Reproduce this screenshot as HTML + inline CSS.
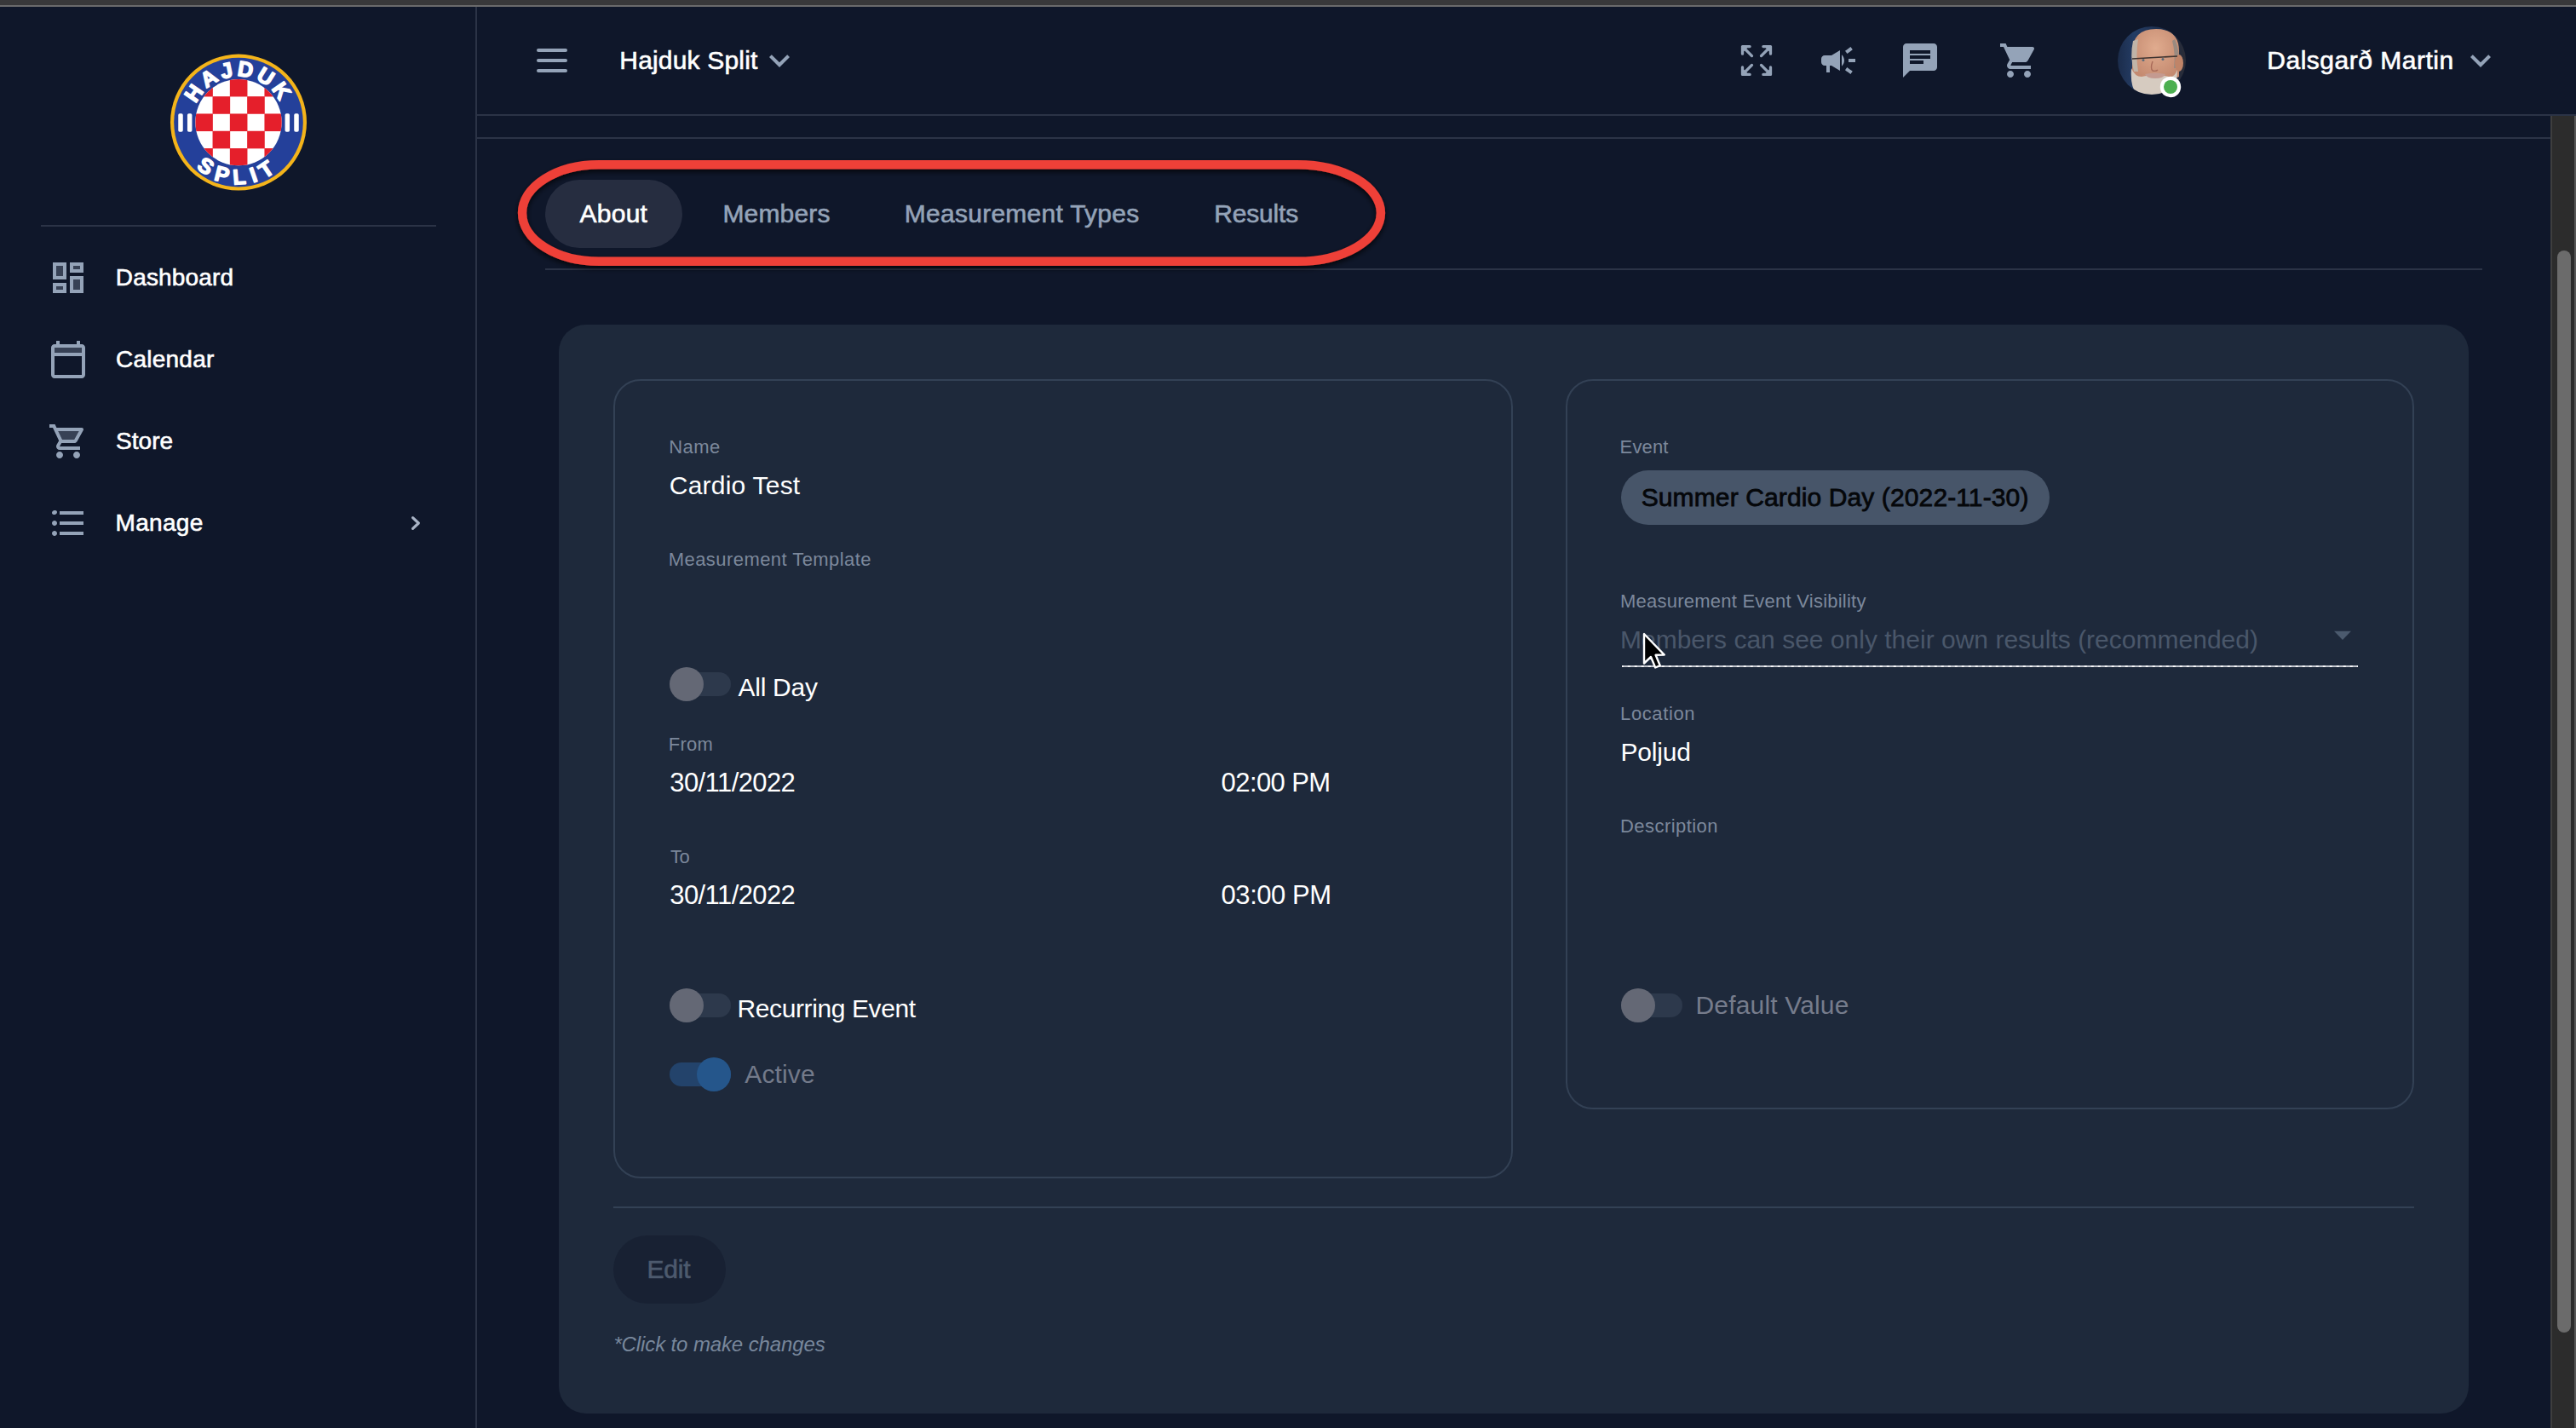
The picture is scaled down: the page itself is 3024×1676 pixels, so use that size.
<!DOCTYPE html>
<html><head><meta charset="utf-8"><style>
html,body{margin:0;padding:0;width:3024px;height:1676px;overflow:hidden;background:#0f172a}
body{position:relative;font-family:"Liberation Sans", sans-serif}
.t{position:absolute;white-space:nowrap;line-height:1}
.bx{position:absolute;box-sizing:border-box}
.ic{position:absolute;overflow:visible}
</style></head><body>
<div class="bx" style="left:0;top:0;width:3024px;height:6px;background:#38383a"></div>
<div class="bx" style="left:0;top:6px;width:3024px;height:2px;background:#6a6a6b"></div>
<div class="bx" style="left:558px;top:8px;width:2px;height:1668px;background:#2b3346"></div>
<svg class="ic" style="left:0;top:0;width:560px;height:270px" viewBox="0 0 560 270">
<defs><clipPath id="ck"><circle cx="280" cy="143.6" r="50.7"/></clipPath>
<path id="arcT" d="M 226 143.6 A 54 54 0 0 1 334 143.6"/>
<path id="arcB" d="M 207.5 143.6 A 72.5 72.5 0 0 0 352.5 143.6"/></defs>
<circle cx="280" cy="143.6" r="80" fill="#f4b41a"/>
<circle cx="280" cy="143.6" r="75.8" fill="#24409a"/>
<circle cx="280" cy="143.6" r="50.7" fill="#ffffff"/>
<g clip-path="url(#ck)" fill="#e51f2b"><rect x="229.25" y="92.85" width="20.60" height="20.60"/><rect x="269.85" y="92.85" width="20.60" height="20.60"/><rect x="310.45" y="92.85" width="20.60" height="20.60"/><rect x="249.55" y="113.15" width="20.60" height="20.60"/><rect x="290.15" y="113.15" width="20.60" height="20.60"/><rect x="229.25" y="133.45" width="20.60" height="20.60"/><rect x="269.85" y="133.45" width="20.60" height="20.60"/><rect x="310.45" y="133.45" width="20.60" height="20.60"/><rect x="249.55" y="153.75" width="20.60" height="20.60"/><rect x="290.15" y="153.75" width="20.60" height="20.60"/><rect x="229.25" y="174.05" width="20.60" height="20.60"/><rect x="269.85" y="174.05" width="20.60" height="20.60"/><rect x="310.45" y="174.05" width="20.60" height="20.60"/></g>
<g fill="#fff" stroke="#fff" stroke-width="1.5" stroke-linejoin="round" font-family="Liberation Sans" font-weight="700" font-size="25">
<text><textPath href="#arcT" startOffset="50%" text-anchor="middle" letter-spacing="3.6">HAJDUK</textPath></text>
<text><textPath href="#arcB" startOffset="50%" text-anchor="middle" letter-spacing="7.5">SPLIT</textPath></text>
<rect x="210" y="134" width="4" height="20" rx="1"/><rect x="220.7" y="134" width="4" height="20" rx="1"/>
<rect x="335.3" y="134" width="4" height="20" rx="1"/><rect x="346" y="134" width="4" height="20" rx="1"/>
</g></svg>
<div class="bx" style="left:48px;top:264px;width:464px;height:2px;background:#2b3346"></div>
<svg class="ic" style="left:56px;top:302px;width:48px;height:48px" viewBox="0 0 24 24" fill="#94a3b8"><path d="M5 5h4v6H5zm10 8h4v6h-4zM5 17h4v2H5zM15 5h4v2h-4z" opacity=".3"/><path d="M3 13h8V3H3v10zm2-8h4v6H5V5zm8 16h8V11h-8v10zm2-8h4v6h-4v-6zM13 3v6h8V3h-8zm6 4h-4V5h4v2zM3 21h8v-6H3v6zm2-4h4v2H5v-2z"/></svg>
<svg class="ic" style="left:56px;top:398px;width:48px;height:48px" viewBox="0 0 24 24" fill="#94a3b8"><path d="M4 5.01h16V8H4z" opacity=".3"/><path d="M20 3h-1V1h-2v2H7V1H5v2H4c-1.1 0-2 .9-2 2v16c0 1.1.9 2 2 2h16c1.1 0 2-.9 2-2V5c0-1.1-.9-2-2-2zm0 18H4V10h16v11zm0-13H4V5h16v3z"/></svg>
<svg class="ic" style="left:56px;top:494px;width:48px;height:48px" viewBox="0 0 24 24" fill="#94a3b8"><path d="M15.55 11l2.76-5H6.16l2.37 5z" opacity=".3"/><path d="M15.55 13c.75 0 1.41-.41 1.75-1.03l3.58-6.49c.37-.66-.11-1.48-.87-1.48H5.21l-.94-2H1v2h2l3.6 7.59-1.35 2.44C4.520 15.37 5.48 17 7 17h12v-2H7l1.1-2h7.45zM6.16 6h12.15l-2.76 5H8.53L6.16 6zM7 18c-1.1 0-1.99.9-1.99 2S5.9 22 7 22s2-.9 2-2-.9-2-2-2zm10 0c-1.1 0-1.99.9-1.99 2s.89 2 1.99 2 2-.9 2-2-.9-2-2-2z"/></svg>
<svg class="ic" style="left:56px;top:590px;width:48px;height:48px" viewBox="0 0 24 24" fill="#94a3b8"><path d="M4 10.5c-.83 0-1.5.67-1.5 1.5s.67 1.5 1.5 1.5 1.5-.67 1.5-1.5-.67-1.5-1.5-1.5zm0-6c-.83 0-1.5.67-1.5 1.5S3.17 7 4 7s1.5-.67 1.5-1.5S4.830 4.5 4 4.5zm0 12c-.83 0-1.5.68-1.5 1.5s.68 1.5 1.5 1.5 1.5-.68 1.5-1.5-.67-1.5-1.5-1.5zM7 19h14v-2H7v2zm0-6h14v-2H7v2zm0-8v2h14V5H7z"/></svg>
<svg class="ic" style="left:470px;top:595px;width:40px;height:40px" viewBox="470 595 40 40"><polyline points="484.6,607.6 491.4,614 484.6,620.4" fill="none" stroke="#a9b4c6" stroke-width="3.2" stroke-linecap="round" stroke-linejoin="round"/></svg>
<div class="bx" style="left:560px;top:134px;width:2464px;height:2px;background:#2b3346"></div>
<div class="bx" style="left:560px;top:161px;width:2434px;height:2px;background:#2b3346"></div>
<div class="bx" style="left:630px;top:57px;width:36px;height:4px;border-radius:2px;background:#94a3b8"></div>
<div class="bx" style="left:630px;top:69px;width:36px;height:4px;border-radius:2px;background:#94a3b8"></div>
<div class="bx" style="left:630px;top:81px;width:36px;height:4px;border-radius:2px;background:#94a3b8"></div>
<svg class="ic" style="left:891px;top:47px;width:48px;height:48px" viewBox="0 0 24 24" fill="#94a3b8"><path d="M16.59 8.59L12 13.17 7.41 8.59 6 10l6 6 6-6z"/></svg>
<svg class="ic" style="left:2030px;top:40px;width:64px;height:64px" viewBox="2030 40 64 64"><g transform="translate(2062 71) scale(1 1) translate(-16.5 -16.4)"><g><path d="M8.6 0 H0 V8.6" fill="none" stroke="#94a3b8" stroke-width="3.3" stroke-linecap="round" stroke-linejoin="round"/><path d="M0 0 H7.4 L0 7.4Z" fill="#94a3b8"/><path d="M1 1 L11 11" stroke="#94a3b8" stroke-width="3.3" stroke-linecap="round"/></g></g><g transform="translate(2062 71) scale(-1 1) translate(-16.5 -16.4)"><g><path d="M8.6 0 H0 V8.6" fill="none" stroke="#94a3b8" stroke-width="3.3" stroke-linecap="round" stroke-linejoin="round"/><path d="M0 0 H7.4 L0 7.4Z" fill="#94a3b8"/><path d="M1 1 L11 11" stroke="#94a3b8" stroke-width="3.3" stroke-linecap="round"/></g></g><g transform="translate(2062 71) scale(1 -1) translate(-16.5 -16.4)"><g><path d="M8.6 0 H0 V8.6" fill="none" stroke="#94a3b8" stroke-width="3.3" stroke-linecap="round" stroke-linejoin="round"/><path d="M0 0 H7.4 L0 7.4Z" fill="#94a3b8"/><path d="M1 1 L11 11" stroke="#94a3b8" stroke-width="3.3" stroke-linecap="round"/></g></g><g transform="translate(2062 71) scale(-1 -1) translate(-16.5 -16.4)"><g><path d="M8.6 0 H0 V8.6" fill="none" stroke="#94a3b8" stroke-width="3.3" stroke-linecap="round" stroke-linejoin="round"/><path d="M0 0 H7.4 L0 7.4Z" fill="#94a3b8"/><path d="M1 1 L11 11" stroke="#94a3b8" stroke-width="3.3" stroke-linecap="round"/></g></g></svg>
<svg class="ic" style="left:2134px;top:47px;width:48px;height:48px" viewBox="0 0 24 24" fill="#94a3b8"><path d="M18 11v2h4v-2h-4zm-2 6.61c.96.71 2.21 1.65 3.2 2.39.4-.53.8-1.07 1.2-1.6-.99-.74-2.24-1.68-3.2-2.4-.4.54-.8 1.08-1.2 1.61zM20.4 5.6c-.4-.53-.8-1.07-1.2-1.6-.99.74-2.24 1.68-3.2 2.4.4.53.8 1.07 1.2 1.6.96-.72 2.21-1.65 3.2-2.4zM4 9c-1.1 0-2 .9-2 2v2c0 1.1.9 2 2 2h1v4h2v-4h1l5 3V6L8 9H4zm11.5 3c0-1.33-.58-2.53-1.5-3.35v6.69c.92-.81 1.5-2.01 1.5-3.34z"/></svg>
<svg class="ic" style="left:2230px;top:47px;width:48px;height:48px" viewBox="0 0 24 24" fill="#94a3b8"><path d="M20 2H4c-1.1 0-1.99.9-1.99 2L2 22l4-4h14c1.1 0 2-.9 2-2V4c0-1.1-.9-2-2-2zM6 9h12v2H6V9zm8 5H6v-2h8v2zm4-6H6V6h12v2z"/></svg>
<svg class="ic" style="left:2346px;top:47px;width:48px;height:48px" viewBox="0 0 24 24" fill="#94a3b8"><path d="M7 18c-1.1 0-1.99.9-1.99 2S5.9 22 7 22s2-.9 2-2-.9-2-2-2zM1 2v2h2l3.6 7.59-1.35 2.45c-.16.28-.25.61-.25.96 0 1.1.9 2 2 2h12v-2H7.42c-.14 0-.25-.11-.25-.25l.03-.12.9-1.63h7.45c.75 0 1.41-.41 1.75-1.03l3.58-6.49c.08-.14.12-.31.12-.48 0-.55-.45-1-1-1H5.21l-.94-2H1zm16 16c-1.1 0-1.99.9-1.99 2s.89 2 1.990 2 2-.9 2-2-.9-2-2-2z"/></svg>
<svg class="ic" style="left:2480px;top:25px;width:90px;height:95px" viewBox="2480 25 90 95">
<defs><clipPath id="av"><circle cx="2526" cy="71" r="40"/></clipPath>
<linearGradient id="avbg" x1="0" x2="1"><stop offset="0" stop-color="#1a2a48"/><stop offset="0.25" stop-color="#243c64"/><stop offset="0.7" stop-color="#1c2c48"/><stop offset="1" stop-color="#2c2c34"/></linearGradient>
<radialGradient id="skin" cx="0.5" cy="0.35" r="0.6"><stop offset="0" stop-color="#e0ab8e"/><stop offset="1" stop-color="#c48a70"/></radialGradient></defs>
<g clip-path="url(#av)">
<rect x="2484" y="29" width="84" height="84" fill="url(#avbg)"/>
<path d="M2503 62 Q2503 34 2531 34 Q2559 34 2558 62 L2558 90 Q2540 100 2520 98 L2503 88Z" fill="url(#skin)"/>
<path d="M2504 48 Q2500 66 2505 84 L2510 84 Q2507 64 2510 46Z" fill="#c0b4a8"/>
<path d="M2553 46 Q2560 60 2557 80 L2552 80 Q2554 62 2550 48Z" fill="#9a8a80"/>
<ellipse cx="2558" cy="74" rx="5" ry="10" fill="#c08468"/>
<path d="M2502 80 Q2500 106 2512 114 L2548 114 Q2556 100 2556 82 Q2552 92 2546 90 Q2530 86 2514 90 Q2506 90 2502 80Z" fill="#d6cbc0"/>
<path d="M2518 87 Q2530 84 2542 87 Q2540 92 2530 92 Q2520 92 2518 87Z" fill="#c49a90"/>
<path d="M2503 69 L2556 66" stroke="#3f3430" stroke-width="1.6" fill="none"/>
<circle cx="2516" cy="70.5" r="1.5" fill="#5a6a78"/><circle cx="2539" cy="69.5" r="1.5" fill="#5a6a78"/>
<path d="M2527 72 Q2524 80 2527 83 Q2531 84 2533 82" stroke="#a86a58" stroke-width="1.4" fill="none"/>
</g>
<circle cx="2548" cy="102" r="12.2" fill="#ffffff"/>
<circle cx="2548" cy="102" r="8" fill="#4caf50"/>
</svg>
<svg class="ic" style="left:2888px;top:47px;width:48px;height:48px" viewBox="0 0 24 24" fill="#94a3b8"><path d="M16.59 8.59L12 13.17 7.41 8.59 6 10l6 6 6-6z"/></svg>
<div class="bx" style="left:640px;top:211px;width:161px;height:80px;border-radius:40px;background:#262d40"></div>
<div class="bx" style="left:640px;top:315px;width:2274px;height:2px;background:#2b3346"></div>
<svg class="ic" style="left:580px;top:170px;width:1080px;height:170px" viewBox="580 170 1080 170">
<defs><filter id="sh" x="-5%" y="-30%" width="110%" height="160%"><feDropShadow dx="0" dy="3" stdDeviation="3" flood-color="#000" flood-opacity="0.75"/></filter></defs>
<path d="M703 193.2 L1523 193.2 A98 56.8 0 0 1 1523 306.8 L703 306.8 A90 56.8 0 0 1 703 193.2 Z" fill="none" stroke="#ee4037" stroke-width="10.4" filter="url(#sh)"/>
</svg>
<div class="bx" style="left:656px;top:381px;width:2242px;height:1278px;border-radius:32px;background:#1e293b"></div>
<div class="bx" style="left:720px;top:445px;width:1056px;height:938px;border-radius:32px;border:2px solid #334155"></div>
<div class="bx" style="left:1838px;top:445px;width:996px;height:857px;border-radius:32px;border:2px solid #334155"></div>
<div class="bx" style="left:786px;top:789px;width:72px;height:28px;border-radius:14px;background:#2d394c"></div><div class="bx" style="left:786px;top:783px;width:40px;height:40px;border-radius:20px;background:#646875"></div>
<div class="bx" style="left:786px;top:1166px;width:72px;height:28px;border-radius:14px;background:#2d394c"></div><div class="bx" style="left:786px;top:1160px;width:40px;height:40px;border-radius:20px;background:#646875"></div>
<div class="bx" style="left:786px;top:1247px;width:72px;height:28px;border-radius:14px;background:#23436b"></div><div class="bx" style="left:818px;top:1241px;width:40px;height:40px;border-radius:20px;background:#25568b"></div>
<div class="bx" style="left:1903px;top:1166px;width:72px;height:28px;border-radius:14px;background:#2d394c"></div><div class="bx" style="left:1903px;top:1160px;width:40px;height:40px;border-radius:20px;background:#646875"></div>
<div class="bx" style="left:1903px;top:552px;width:503px;height:64px;border-radius:32px;background:#475569"></div>
<svg class="ic" style="left:2740px;top:740px;width:20px;height:11px" viewBox="0 0 20 11"><path d="M0 0.8H20L10 10.9Z" fill="#4b5a6e"/></svg>
<div class="bx" style="left:1904px;top:781px;width:864px;height:2px;background:repeating-linear-gradient(90deg,#c0c4cc 0 5.3px,#f4f4f6 5.3px 8px);background-position:1.8px 0"></div>
<div class="bx" style="left:720px;top:1416px;width:2114px;height:2px;background:#334155"></div>
<div class="bx" style="left:720px;top:1450px;width:132px;height:80px;border-radius:40px;background:#182133"></div>
<div class="bx" style="left:2994px;top:136px;width:30px;height:1540px;background:#2c2c2c;border-left:2px solid #3e3e3e;border-right:2px solid #575757"></div>
<div class="bx" style="left:3002px;top:294px;width:16px;height:1270px;border-radius:8px;background:#6b6b6b"></div>
<div class="t" style="left:135.8px;top:312.0px;font-size:28px;letter-spacing:0.15px;color:#ffffff;-webkit-text-stroke:0.6px #ffffff;">Dashboard</div>
<div class="t" style="left:136.0px;top:408.0px;font-size:28px;letter-spacing:0.243px;color:#ffffff;-webkit-text-stroke:0.6px #ffffff;">Calendar</div>
<div class="t" style="left:136.0px;top:504.0px;font-size:28px;letter-spacing:0.05px;color:#ffffff;-webkit-text-stroke:0.6px #ffffff;">Store</div>
<div class="t" style="left:135.5px;top:600.0px;font-size:28px;letter-spacing:0.32px;color:#ffffff;-webkit-text-stroke:0.6px #ffffff;">Manage</div>
<div class="t" style="left:727.3px;top:56.0px;font-size:30px;letter-spacing:0.182px;color:#ffffff;-webkit-text-stroke:0.6px #ffffff;">Hajduk Split</div>
<div class="t" style="left:2661.3px;top:56.0px;font-size:30px;letter-spacing:0.514px;color:#ffffff;-webkit-text-stroke:0.6px #ffffff;">Dalsgarð Martin</div>
<div class="t" style="left:680.5px;top:236.0px;font-size:30px;letter-spacing:0.25px;color:#ffffff;-webkit-text-stroke:0.6px #ffffff;">About</div>
<div class="t" style="left:848.4px;top:236.0px;font-size:30px;letter-spacing:0.167px;color:#94a3b8;-webkit-text-stroke:0.6px #94a3b8;">Members</div>
<div class="t" style="left:1061.8px;top:236.0px;font-size:30px;letter-spacing:0.262px;color:#94a3b8;-webkit-text-stroke:0.6px #94a3b8;">Measurement Types</div>
<div class="t" style="left:1425.2px;top:236.0px;font-size:30px;letter-spacing:-0.167px;color:#94a3b8;-webkit-text-stroke:0.6px #94a3b8;">Results</div>
<div class="t" style="left:785.2px;top:514.0px;font-size:22px;letter-spacing:0.433px;color:#7c889b;">Name</div>
<div class="t" style="left:784.7px;top:646.0px;font-size:22px;letter-spacing:0.442px;color:#7c889b;">Measurement Template</div>
<div class="t" style="left:784.7px;top:863.0px;font-size:22px;letter-spacing:0.267px;color:#7c889b;">From</div>
<div class="t" style="left:787.0px;top:995.0px;font-size:22px;letter-spacing:-0.5px;color:#7c889b;">To</div>
<div class="t" style="left:785.8px;top:555.4px;font-size:30px;letter-spacing:0.22px;color:#ffffff;">Cardio Test</div>
<div class="t" style="left:786.3px;top:903.2px;font-size:31px;letter-spacing:-0.589px;color:#ffffff;">30/11/2022</div>
<div class="t" style="left:1433.6px;top:903.2px;font-size:31px;letter-spacing:-0.6px;color:#ffffff;">02:00 PM</div>
<div class="t" style="left:786.3px;top:1035.0px;font-size:31px;letter-spacing:-0.589px;color:#ffffff;">30/11/2022</div>
<div class="t" style="left:1433.6px;top:1035.0px;font-size:31px;letter-spacing:-0.471px;color:#ffffff;">03:00 PM</div>
<div class="t" style="left:866.5px;top:792.0px;font-size:30px;letter-spacing:-0.267px;color:#ffffff;">All Day</div>
<div class="t" style="left:865.5px;top:1169.0px;font-size:30px;letter-spacing:-0.393px;color:#ffffff;">Recurring Event</div>
<div class="t" style="left:874.3px;top:1246.0px;font-size:30px;letter-spacing:0.14px;color:#737a8a;">Active</div>
<div class="t" style="left:1901.6px;top:514.0px;font-size:22px;letter-spacing:0.125px;color:#7c889b;">Event</div>
<div class="t" style="left:1926.7px;top:569.0px;font-size:30px;letter-spacing:0.117px;color:#05070a;-webkit-text-stroke:0.8px #05070a;">Summer Cardio Day (2022-11-30)</div>
<div class="t" style="left:1902.0px;top:695.3px;font-size:22px;letter-spacing:0.237px;color:#7c889b;">Measurement Event Visibility</div>
<div class="t" style="left:1902.0px;top:736.0px;font-size:30px;letter-spacing:0.006px;color:#4a576a;">Members can see only their own results (recommended)</div>
<div class="t" style="left:1902.1px;top:827.0px;font-size:22px;letter-spacing:0.6px;color:#7c889b;">Location</div>
<div class="t" style="left:1902.5px;top:868.0px;font-size:30px;letter-spacing:-0.2px;color:#ffffff;">Poljud</div>
<div class="t" style="left:1902.0px;top:959.0px;font-size:22px;letter-spacing:0.44px;color:#7c889b;">Description</div>
<div class="t" style="left:1990.5px;top:1165.0px;font-size:30px;letter-spacing:0.167px;color:#767c8c;">Default Value</div>
<div class="t" style="left:759.5px;top:1475.2px;font-size:30px;letter-spacing:-0.2px;color:#4d5a6e;-webkit-text-stroke:0.6px #4d5a6e;">Edit</div>
<div class="t" style="left:720.4px;top:1566.3px;font-size:24px;letter-spacing:-0.119px;color:#78879b;font-style:italic;">*Click to make changes</div>
<svg class="ic" style="left:1926px;top:740.6px;width:34px;height:48px" viewBox="0 0 34 48">
<path d="M4 3 L4 37.5 L12 30 L17.2 42.5 L22.8 40.2 L17.6 27.8 L27.8 27.6 Z" fill="#000" stroke="#fff" stroke-width="2.4" stroke-linejoin="round"/>
</svg>
</body></html>
